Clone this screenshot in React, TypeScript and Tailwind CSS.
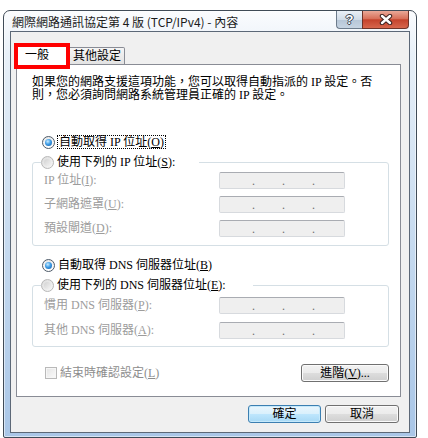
import React from 'react';

const Radio: React.FC<{ checked?: boolean }> = ({ checked }) => (
  <span
    className={
      checked
        ? 'w-[13px] h-[13px] shrink-0 rounded-full border border-[#4d5a68] bg-[linear-gradient(180deg,#e9e9e9,#ffffff)] flex items-center justify-center'
        : 'w-[13px] h-[13px] shrink-0 rounded-full border border-[#b8b8b8] bg-[linear-gradient(135deg,#dcdcdc,#f7f7f7)] flex items-center justify-center'
    }
  >
    {checked ? (
      <span className="w-[7px] h-[7px] rounded-full bg-[radial-gradient(circle_at_40%_35%,#c9ecff_0%,#3f9de6_45%,#0c58a6_100%)]" />
    ) : (
      <span className="w-[7px] h-[7px] rounded-full bg-[linear-gradient(135deg,#d2d2d2,#f3f3f3)]" />
    )}
  </span>
);

const IpBox: React.FC = () => (
  <div className="w-[126px] h-[17px] rounded-[2px] border border-[#d7dade] border-t-[#a9acb2] bg-[#efefef] flex items-end pl-[32px] gap-[27px] leading-[14px] text-[#6d6d6d]">
    <span>.</span>
    <span>.</span>
    <span>.</span>
  </div>
);

const Field: React.FC<{ label: React.ReactNode }> = ({ label }) => (
  <div className="flex items-center h-[17px]">
    <span className="w-[186px] pl-[11px] text-[#9c9c9c] whitespace-nowrap leading-[17px]">{label}</span>
    <IpBox />
  </div>
);

const Btn: React.FC<{ primary?: boolean; w: string; children: React.ReactNode }> = ({ primary, w, children }) => (
  <div
    className={
      (primary
        ? 'border-[#3c7fb1] bg-[linear-gradient(180deg,#eaf6fd_0%,#d9f0fc_50%,#bee6fd_51%,#a7d9f5_100%)] shadow-[inset_0_0_0_1px_#c5e9fb] '
        : 'border-[#707070] bg-[linear-gradient(180deg,#f2f2f2_0%,#ebebeb_50%,#dddddd_51%,#cfcfcf_100%)] shadow-[inset_0_0_0_1px_#fbfbfb] ') +
      w +
      ' h-[18px] rounded-[3px] border flex items-center justify-center leading-[16px] text-black'
    }
  >
    {children}
  </div>
);

export default function App() {
  return (
    <div className="w-[428px] h-[438px] bg-white pt-[10px] pl-[3px] overflow-hidden font-['Liberation_Serif','Noto_Sans_CJK_TC',serif] text-[12px] text-black">
      <div className="w-[414px] h-[428px] flex flex-col rounded-t-[7px] rounded-b-[2px] border border-[#404b57] bg-[linear-gradient(180deg,#fbfcfe_0%,#e8f0f8_10%,#c6daef_55%,#a9c6e7_100%)] px-[6px] pb-[4px] shadow-[inset_0_0_0_1px_rgba(255,255,255,0.55)]">
        {/* title bar */}
        <div className="h-[20px] flex items-start shrink-0">
          <span className="pl-[2px] pt-[4px] leading-[14px] text-[12px] text-[#1b1b1b] font-['Noto_Sans_CJK_TC',sans-serif] whitespace-nowrap">
            網際網路通訊協定第 4 版 (TCP/IPv4) - 內容
          </span>
          <div className="ml-auto mr-[1px] flex h-[18px]">
            <div className="w-[26px] h-full border border-t-0 border-r-0 border-[#6c7b8b] rounded-bl-[4px] bg-[linear-gradient(180deg,#e9eff6_0%,#d0dbe7_50%,#b6c6d7_52%,#c6d4e2_100%)] flex items-center justify-center">
              <span className="text-white font-bold text-[13px] leading-none font-['Liberation_Sans',sans-serif] [text-shadow:1px_0_#35424f,-1px_0_#35424f,0_1px_#35424f,0_-1px_#35424f]">
                ?
              </span>
            </div>
            <div className="w-[47px] h-full border border-t-0 border-[#6e3328] rounded-br-[4px] bg-[linear-gradient(180deg,#eaa998_0%,#d8705a_45%,#c4432c_52%,#d7664c_100%)] flex items-center justify-center">
              <svg width="16" height="11" viewBox="0 0 16 11">
                <path d="M4 2 L12 9 M12 2 L4 9" stroke="#3b2220" strokeWidth="4.4" strokeLinecap="round" />
                <path d="M4 2 L12 9 M12 2 L4 9" stroke="#ffffff" strokeWidth="2.4" strokeLinecap="round" />
              </svg>
            </div>
          </div>
        </div>

        {/* client area */}
        <div className="h-[402px] border border-[#5c6877] bg-[#f0f0f0] pl-[5px] pt-[12px] flex flex-col">
          {/* tabs */}
          <div className="relative z-10 flex items-end h-[21px] -mb-[1px]">
            <div className="w-[53px] h-[21px] border border-b-0 border-[#898c95] bg-white rounded-t-[2px] pl-[8px] leading-[20px]">
              一般
            </div>
            <div className="w-[56px] h-[18px] border border-l-0 border-[#898c95] rounded-tr-[2px] bg-[linear-gradient(180deg,#f5f5f5,#e3e3e3)] pl-[4px] leading-[17px]">
              其他設定
            </div>
            <div className="absolute left-[-2px] top-[-1px] w-[56px] h-[26px] border-[4px] border-[#ff0000]" />
          </div>

          {/* page */}
          <div className="w-[385px] h-[333px] border border-[#898c95] bg-white flex flex-col shrink-0">
            <p className="pl-[15px] pt-[11px] leading-[13px] whitespace-nowrap">
              如果您的網路支援這項功能，您可以取得自動指派的 IP 設定。否
              <br />
              則，您必須詢問網路系統管理員正確的 IP 設定。
            </p>

            <div className="mt-[33px] ml-[25px] h-[14px] flex items-center gap-[2px]">
              <Radio checked />
              <span className="border border-dotted border-black px-[1px] leading-[12px] whitespace-nowrap">
                自動取得 IP 位址(<u>O</u>)
              </span>
            </div>

            <fieldset className="mt-[6px] ml-[15px] w-[357px] border border-[#d5dfe5] rounded-[3px] pb-[8px]">
              <legend className="ml-[8px] w-[158px] h-[14px] flex items-center gap-[3px]">
                <Radio />
                <span className="whitespace-nowrap leading-[14px]">
                  使用下列的 IP 位址(<u>S</u>):
                </span>
              </legend>
              <div className="mt-[3px] flex flex-col gap-[7px]">
                <Field label={<>IP 位址(<u>I</u>):</>} />
                <Field label={<>子網路遮罩(<u>U</u>):</>} />
                <Field label={<>預設閘道(<u>D</u>):</>} />
              </div>
            </fieldset>

            <div className="mt-[12px] ml-[25px] h-[14px] flex items-center gap-[3px]">
              <Radio checked />
              <span className="leading-[14px] whitespace-nowrap">
                自動取得 DNS 伺服器位址(<u>B</u>)
              </span>
            </div>

            <fieldset className="mt-[6px] ml-[15px] w-[357px] border border-[#d5dfe5] rounded-[3px] pb-[7px]">
              <legend className="ml-[8px] w-[212px] h-[14px] flex items-center gap-[3px]">
                <Radio />
                <span className="whitespace-nowrap leading-[14px]">
                  使用下列的 DNS 伺服器位址(<u>E</u>):
                </span>
              </legend>
              <div className="mt-[5px] flex flex-col gap-[8px]">
                <Field label={<>慣用 DNS 伺服器(<u>P</u>):</>} />
                <Field label={<>其他 DNS 伺服器(<u>A</u>):</>} />
              </div>
            </fieldset>

            <div className="mt-[17px] h-[18px] pl-[28px] pr-[11px] flex items-center justify-between">
              <div className="flex items-center gap-[3px]">
                <span className="w-[12px] h-[12px] border border-[#b9b9b9] bg-[linear-gradient(135deg,#e4e4e4,#fbfbfb)] shadow-[inset_0_0_0_1px_#f6f6f6]" />
                <span className="text-[#8d8d8d] leading-[14px] whitespace-nowrap">
                  結束時確認設定(<u>L</u>)
                </span>
              </div>
              <Btn w="w-[88px]">
                進階(<u>V</u>)...
              </Btn>
            </div>
          </div>

          {/* dialog buttons */}
          <div className="mt-[8px] pr-[10px] flex justify-end gap-[4px]">
            <Btn primary w="w-[73px]">
              確定
            </Btn>
            <Btn w="w-[74px]">取消</Btn>
          </div>
        </div>
      </div>
    </div>
  );
}
